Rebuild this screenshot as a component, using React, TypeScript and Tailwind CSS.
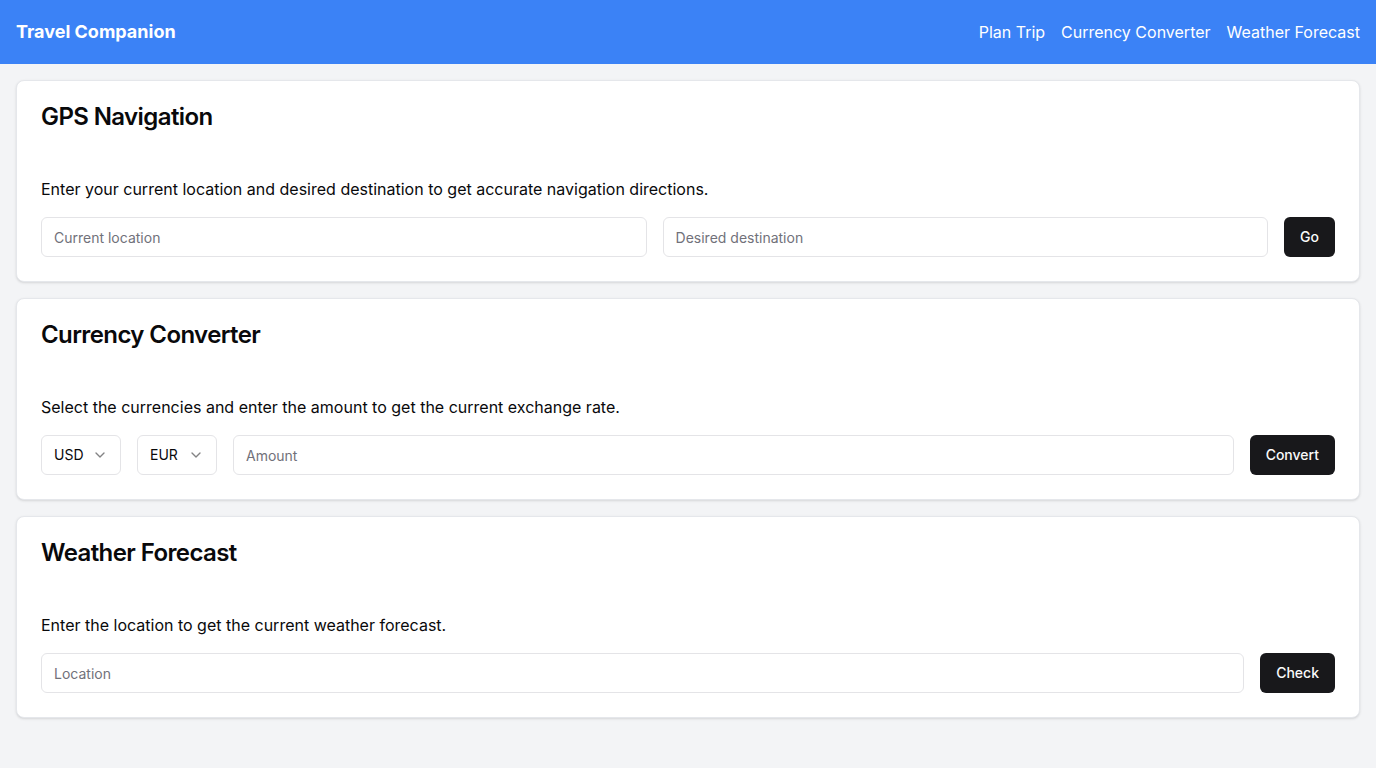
import React from "react";

function Chevron() {
  return (
    <svg width="16" height="16" viewBox="0 0 24 24" fill="none" stroke="currentColor" strokeWidth="2" strokeLinecap="round" strokeLinejoin="round" className="opacity-50">
      <path d="m6 9 6 6 6-6" />
    </svg>
  );
}

function Card({ title, desc, children }: { title: string; desc: string; children: React.ReactNode }) {
  return (
    <div className="bg-white rounded-lg border border-[#e5e7eb] shadow-sm">
      <div className="p-6 pb-0">
        <h2 className="text-2xl leading-6 font-semibold tracking-tight text-[#09090b]">{title}</h2>
      </div>
      <div className="p-6 pt-12">
        <p className="text-base leading-6 text-[#09090b] mb-4">{desc}</p>
        <div className="flex gap-4">{children}</div>
      </div>
    </div>
  );
}

function Input({ placeholder }: { placeholder: string }) {
  return (
    <input
      placeholder={placeholder}
      className="flex-1 h-10 rounded-md border border-[#e4e4e7] bg-white px-3 text-sm placeholder:text-[#71717a] outline-none"
    />
  );
}

function Btn({ children }: { children: React.ReactNode }) {
  return (
    <button className="h-10 px-4 rounded-md bg-[#18181b] text-[#fafafa] text-sm font-medium">{children}</button>
  );
}

function Select({ value }: { value: string }) {
  return (
    <button className="w-20 h-10 rounded-md border border-[#e4e4e7] bg-white px-3 flex items-center justify-between text-sm text-[#09090b]">
      <span>{value}</span>
      <Chevron />
    </button>
  );
}

export default function App() {
  return (
    <div className="min-h-screen bg-[#f3f4f6] text-[#09090b]" style={{ fontFamily: "Inter, 'Noto Sans', sans-serif" }}>
      <header className="h-16 bg-[#3b82f6] px-4 flex items-center justify-between text-white">
        <h1 className="text-lg font-bold">Travel Companion</h1>
        <nav className="flex gap-4 text-base">
          <a>Plan Trip</a>
          <a>Currency Converter</a>
          <a>Weather Forecast</a>
        </nav>
      </header>
      <main className="p-4 flex flex-col gap-4">
        <Card title="GPS Navigation" desc="Enter your current location and desired destination to get accurate navigation directions.">
          <Input placeholder="Current location" />
          <Input placeholder="Desired destination" />
          <Btn>Go</Btn>
        </Card>
        <Card title="Currency Converter" desc="Select the currencies and enter the amount to get the current exchange rate.">
          <Select value="USD" />
          <Select value="EUR" />
          <Input placeholder="Amount" />
          <Btn>Convert</Btn>
        </Card>
        <Card title="Weather Forecast" desc="Enter the location to get the current weather forecast.">
          <Input placeholder="Location" />
          <Btn>Check</Btn>
        </Card>
      </main>
    </div>
  );
}
